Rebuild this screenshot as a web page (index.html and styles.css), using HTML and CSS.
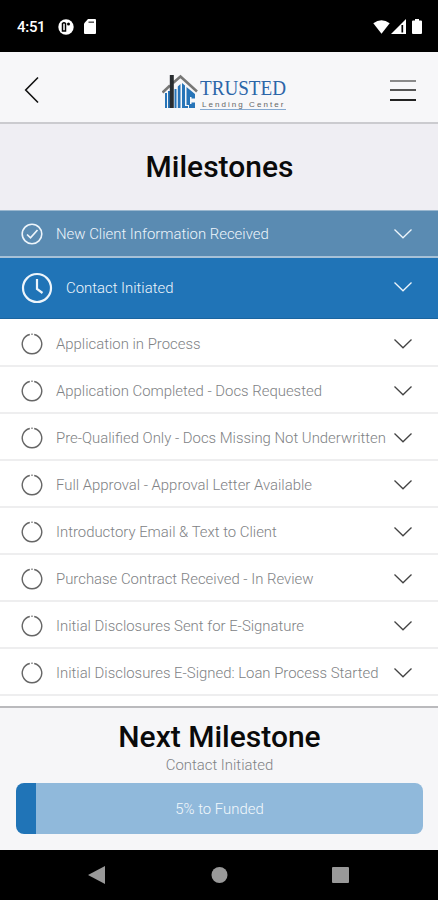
FILE: index.html
```html
<!DOCTYPE html>
<html lang="en">
<head>
<meta charset="utf-8">
<title>Milestones</title>
<link rel="stylesheet" href="styles.css">
</head>
<body>
<svg width="0" height="0" class="defs">
  <symbol id="chevron" viewBox="0 0 20 12"><path d="M1.500 1.500 10 9.800 18.500 1.500" fill="none" stroke="currentColor" stroke-width="1.300"/></symbol>
  <symbol id="pending" viewBox="0 0 22 22"><path d="M13.200 1.500A9.750 9.750 0 1 1 8.800 1.500M10.400 1.300H11.600" fill="none" stroke="currentColor" stroke-width="1.400"/></symbol>
</svg>
<div class="phone">
  <div class="status">
    <span class="time">4:51</span>
    <svg class="app-icon" width="16" height="16" viewBox="0 0 16 16"><circle cx="8" cy="8" r="7.700" fill="#fff"/><path d="M4.500 4.500Q6 3 7.500 4.500V12H4.500z" fill="#fff" stroke="#000" stroke-width="1.500"/><circle cx="10.500" cy="5" r="1.500"/></svg>
    <svg class="sd-icon" width="12" height="15" viewBox="0 0 12 15"><path d="M4 0h7q1 0 1 1v13q0 1-1 1H1q-1 0-1-1V4.500z" fill="#fff"/><path d="M4.500 3.200h5.500" stroke="#555" stroke-width="1.500"/></svg>
    <div class="signals">
      <svg width="17" height="14" viewBox="0 0 17 14"><path d="M.3 3.200Q8.500-2.800 16.700 3.200L8.500 13.800z" fill="#fff"/></svg>
      <svg width="15" height="15" viewBox="0 0 15 15"><path d="M0 15 15 0v15z" fill="#fff"/><path d="M11.300 6v7.500" stroke="#000" stroke-width="1.700"/></svg>
      <svg class="battery" width="10" height="15" viewBox="0 0 10 15"><path d="M3 0h4v1.500h2q1 0 1 1V14q0 1-1 1H1q-1 0-1-1V2.500q0-1 1-1h2z" fill="#fff"/></svg>
    </div>
  </div>
  <header class="header">
    <svg width="16" height="28" viewBox="0 0 16 28"><path d="M14 1.500 1.700 14 14 26.500" fill="none" stroke="#111" stroke-width="1.600"/></svg>
    <div class="logo">
      <svg width="38" height="37" viewBox="0 0 38 37">
        <path d="M4 20v15M7 18v17M13.500 16v19" stroke="#2774b8" stroke-width="2"/>
        <path d="M15.800 13.500 18.500 11V35h-2.700zM20 10l3 2.500V33h3v2h-6z" fill="#2774b8"/>
        <path d="M24.500 14 33 21v4.500h-3.500V24h-1.500v7h1.500v-1.500H33V35h-6V32h-2.500z" fill="#2774b8"/>
        <path d="M.5 19.500 8 12.500M11 10 18.500 3.500 35 18.500" fill="none" stroke="#777776" stroke-width="2.600"/>
        <path d="M7.800 2h4v33h-4z" fill="#292d30"/>
      </svg>
      <div class="wordmark">
        <div class="trusted">TRUSTED</div>
        <div class="lending">Lending Center</div>
      </div>
    </div>
    <div class="menu"><i></i><i></i><i></i></div>
  </header>
  <div class="title"><h1>Milestones</h1></div>
  <main class="list">
    <div class="row done"><svg class="state" viewBox="0 0 22 22"><circle cx="11" cy="11" r="9.800" fill="none" stroke="currentColor" stroke-width="1.600"/><path d="m6 11.500 3.500 3.300 7-7.800" fill="none" stroke="currentColor" stroke-width="1.700"/></svg><span>New Client Information Received</span><svg class="chev"><use href="#chevron"/></svg></div>
    <div class="row current"><svg class="state" viewBox="0 0 32 32"><circle cx="16" cy="16" r="14" fill="none" stroke="currentColor" stroke-width="2.200"/><path d="M16 7v10l5.500 4" fill="none" stroke="currentColor" stroke-width="2.200"/></svg><span>Contact Initiated</span><svg class="chev"><use href="#chevron"/></svg></div>
    <div class="row"><svg class="state"><use href="#pending"/></svg><span>Application in Process</span><svg class="chev"><use href="#chevron"/></svg></div>
    <div class="row"><svg class="state"><use href="#pending"/></svg><span>Application Completed - Docs Requested</span><svg class="chev"><use href="#chevron"/></svg></div>
    <div class="row"><svg class="state"><use href="#pending"/></svg><span>Pre-Qualified Only - Docs Missing Not Underwritten</span><svg class="chev"><use href="#chevron"/></svg></div>
    <div class="row"><svg class="state"><use href="#pending"/></svg><span>Full Approval - Approval Letter Available</span><svg class="chev"><use href="#chevron"/></svg></div>
    <div class="row"><svg class="state"><use href="#pending"/></svg><span>Introductory Email &amp; Text to Client</span><svg class="chev"><use href="#chevron"/></svg></div>
    <div class="row"><svg class="state"><use href="#pending"/></svg><span>Purchase Contract Received - In Review</span><svg class="chev"><use href="#chevron"/></svg></div>
    <div class="row"><svg class="state"><use href="#pending"/></svg><span>Initial Disclosures Sent for E-Signature</span><svg class="chev"><use href="#chevron"/></svg></div>
    <div class="row"><svg class="state"><use href="#pending"/></svg><span>Initial Disclosures E-Signed: Loan Process Started</span><svg class="chev"><use href="#chevron"/></svg></div>
  </main>
  <section class="next">
    <h2>Next Milestone</h2>
    <p>Contact Initiated</p>
    <div class="progress"><span>5% to Funded</span></div>
  </section>
  <nav class="nav">
    <svg width="438" height="50" viewBox="0 0 438 50"><path d="M88 25 105 16v18z" fill="#999"/><circle cx="219.500" cy="25" r="8" fill="#999"/><rect x="332" y="17" width="17" height="16" rx="1" fill="#999"/></svg>
  </nav>
</div>
</body>
</html>
```
FILE: styles.css
```css
* { box-sizing: border-box; }
body { margin: 0; font-family: Roboto, "Liberation Sans", sans-serif; background: #fff; }
.defs { display: block; }
svg { display: block; flex: none; }
.phone { width: 438px; height: 900px; display: flex; flex-direction: column; overflow: hidden; }
.status { height: 52px; flex: none; background: #000; color: #fff; display: flex; align-items: center; padding: 1px 16px 0 17px; }
.time { width: 41px; font-size: 15px; font-weight: 500; line-height: 20px; letter-spacing: -0.3px; }
.sd-icon { margin-left: 10px; }
.signals { margin-left: auto; display: flex; align-items: center; gap: 1px; }
.battery { margin-left: 5px; }
.header { height: 72px; flex: none; background: #f7f7f9; border-bottom: 2px solid #cbcbcf; display: flex; align-items: center; padding: 6px 22px 0 24px; }
.logo { margin-left: 122px; margin-top: 3px; display: flex; align-items: flex-start; }
.wordmark { width: 86px; height: 37px; border-bottom: 1.500px solid #85a9d0; padding-top: 4px; white-space: nowrap; }
.trusted { width: 96px; font: 21px/23px "Liberation Serif", serif; color: #2b65a8; transform: scaleX(.91); transform-origin: 0 0; }
.lending { font: 8px/9px "Liberation Sans", sans-serif; color: #666; letter-spacing: 2.05px; padding-left: 2px; }
.menu { margin-left: auto; width: 26px; height: 21px; display: flex; flex-direction: column; justify-content: space-between; }
.menu i { height: 2px; background: #222; }
.menu i:first-child { background: #8a8a8a; }
.menu i:nth-child(2) { background: #555; }
.title { height: 86px; flex: none; background: #efeef3; display: flex; align-items: center; justify-content: center; padding-left: 1px; }
h1, h2 { margin: 0; color: #0a0a0a; font-size: 30px; line-height: 36px; font-weight: 500; }
.list { height: 496px; flex: none; overflow: hidden; }
.row { height: 47px; border-bottom: 2px solid #eeeeef; display: flex; align-items: center; padding: 2px 25px 0 21px; color: #808285; font-size: 14.9px; font-weight: 300; white-space: nowrap; }
.state { width: 22px; height: 22px; margin-right: 13px; color: #666; }
.chev { width: 20px; height: 12px; margin-left: auto; color: #444; }
.done { height: 48px; background: #5a8bb2; border-top: 1px solid #9ab7cf; border-bottom: 2px solid #a6c1d7; color: #edf5fb; padding-top: 0; }
.current { height: 61px; background: #2074b7; border-bottom: 1px solid #1a65a0; color: #edf5fb; padding-top: 0; }
.current + .row { height: 48px; padding-top: 3px; }
.current .chev { margin-bottom: 2px; }
.done svg, .current svg { color: #edf5fb; }
.current .state { width: 32px; height: 32px; margin-right: 13px; }
.next { height: 144px; flex: none; background: #f6f6f8; border-top: 2px solid #bababd; padding: 11px 15px 0 16px; text-align: center; }
.next p { margin: 1px 0 0; font-size: 14.9px; line-height: 18px; font-weight: 300; color: #808285; }
.progress { margin-top: 9px; height: 51px; border-radius: 8px; background: linear-gradient(90deg, #2074b7 20.5px, #90b9db 20.5px); color: #f2f8fc; font-size: 14.9px; font-weight: 300; display: flex; align-items: center; justify-content: center; }
.nav { height: 50px; flex: none; background: #000; }
```
